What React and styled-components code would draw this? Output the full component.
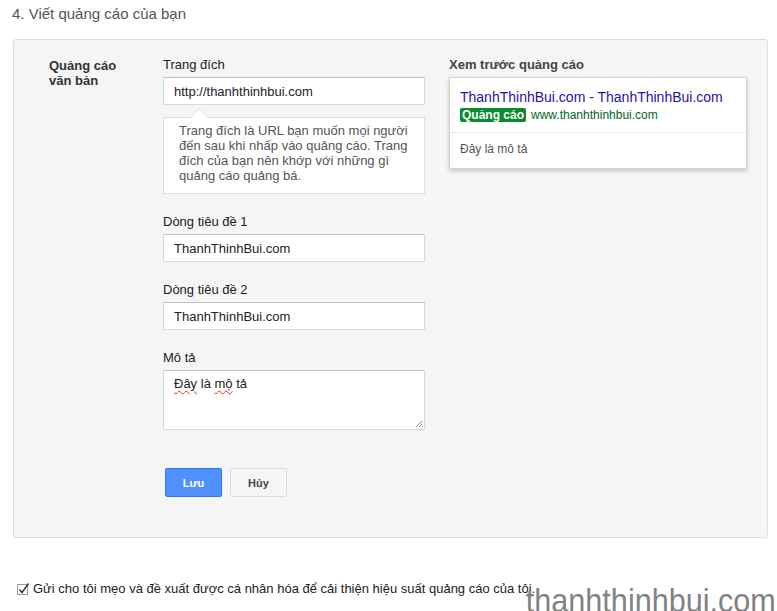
import React from 'react'
import styled, { createGlobalStyle } from 'styled-components'

const GlobalStyle = createGlobalStyle`
  body {
    margin: 0;
    background: #fff;
    font-family: 'Liberation Sans', Arial, sans-serif;
    color: #333;
  }
`

const Page = styled.div`
  position: relative;
  width: 777px;
  height: 611px;
  overflow: hidden;
`

const Heading = styled.h2`
  margin: 0;
  padding: 5px 0 0 12px;
  font-size: 15px;
  line-height: 18px;
  font-weight: 400;
  color: #555;
`

const Panel = styled.div`
  box-sizing: border-box;
  margin: 16px 0 0 13px;
  width: 755px;
  height: 499px;
  padding: 17px 0 0 35px;
  background: #f5f5f5;
  border: 1px solid #dcdcdc;
  border-radius: 3px;
  display: grid;
  grid-template-columns: 90px 262px 298px;
  column-gap: 24px;
  align-items: start;
`

const SideLabel = styled.div`
  font-size: 13px;
  line-height: 15px;
  font-weight: 700;
  color: #333;
  max-width: 70px;
  padding-top: 1px;
`

const FormCol = styled.div`
  display: flex;
  flex-direction: column;
`

const Field = styled.div`
  display: flex;
  flex-direction: column;
  gap: 4px;
  margin-top: ${p => p.$mt ?? 0}px;
`

const Label = styled.label`
  font-size: 13px;
  line-height: 16px;
  color: #222;
`

const Input = styled.input`
  box-sizing: border-box;
  width: 262px;
  height: 28px;
  padding: 0 10px;
  border: 1px solid #d9d9d9;
  border-top-color: #c0c0c0;
  background: #fff;
  font-family: 'Liberation Sans', Arial, sans-serif;
  font-size: 13px;
  color: #222;
  outline: none;
`

const Squiggle = styled.span`
  text-decoration: underline wavy #e03030;
  text-decoration-thickness: 1px;
  text-underline-offset: 2px;
`

const FakeArea = styled.div`
  position: relative;
  box-sizing: border-box;
  width: 262px;
  height: 60px;
  padding: 4px 10px;
  border: 1px solid #d9d9d9;
  border-top-color: #c0c0c0;
  background: #fff;
  font-size: 13px;
  line-height: 18px;
  color: #222;
`

const Grip = styled.svg`
  position: absolute;
  right: 1px;
  bottom: 1px;
`

const Tip = styled.div`
  position: relative;
  margin-top: 12px;
  box-sizing: border-box;
  width: 262px;
  padding: 5px 12px 10px 15px;
  background: #fff;
  border: 1px solid #ddd;
  font-size: 13px;
  line-height: 15px;
  color: #555;

  &::before, &::after {
    content: '';
    position: absolute;
    left: 26px;
    width: 0;
    height: 0;
    border: 9px solid transparent;
    border-top: 0;
  }
  &::before {
    top: -10px;
    border-bottom: 10px solid #ddd;
  }
  &::after {
    top: -9px;
    border-bottom: 10px solid #fff;
  }
`

const Buttons = styled.div`
  display: flex;
  gap: 8px;
  margin: 38px 0 0 2px;
`

const Button = styled.button`
  box-sizing: border-box;
  width: 57px;
  height: 29px;
  border-radius: 2px;
  font-family: 'Liberation Sans', Arial, sans-serif;
  font-size: 11px;
  font-weight: 700;
  border: 1px solid ${p => (p.$primary ? '#3079ed' : '#dcdcdc')};
  background: ${p => (p.$primary ? '#4d90fe' : '#f5f5f5')};
  color: ${p => (p.$primary ? '#fff' : '#444')};
`

const PreviewCol = styled.div`
  display: flex;
  flex-direction: column;
  gap: 4px;
`

const PreviewTitle = styled.div`
  font-size: 13px;
  line-height: 16px;
  font-weight: 700;
  color: #444;
`

const Card = styled.div`
  background: #fff;
  border: 1px solid #d4d4d4;
  box-shadow: 0 2px 4px rgba(0, 0, 0, 0.2);
`

const CardHead = styled.div`
  padding: 10px 10px 9px;
  border-bottom: 1px solid #ebebeb;
`

const AdTitle = styled.div`
  font-size: 14px;
  line-height: 19px;
  color: #2a0fae;
`

const AdUrl = styled.div`
  display: flex;
  align-items: center;
  gap: 5px;
  font-size: 12px;
  line-height: 16px;
  color: #006621;
`

const Badge = styled.span`
  background: #0a8a2e;
  color: #fff;
  font-weight: 700;
  font-size: 12px;
  line-height: 14px;
  padding: 0 2px;
  border-radius: 2px;
`

const CardBody = styled.div`
  padding: 8px 10px 11px;
  font-size: 12px;
  line-height: 16px;
  color: #545454;
`

const Consent = styled.div`
  display: flex;
  align-items: center;
  gap: 3px;
  margin: 43px 0 0 17px;
  font-size: 13px;
  color: #222;
`

const Watermark = styled.div`
  position: absolute;
  right: 1px;
  bottom: -6px;
  font-size: 34px;
  line-height: 34px;
  color: #828282;
  transform: scaleX(0.9);
  transform-origin: right bottom;
`

const CheckIcon = () => (
  <svg width="13" height="13" viewBox="0 0 13 13">
    <rect x="0.5" y="2.5" width="10" height="10" fill="#fff" stroke="#9a9a9a" />
    <path d="M2.5 7.5 L5 10.5 L11.5 1.5" fill="none" stroke="#333" strokeWidth="1.4" />
  </svg>
)

export default function App() {
  return (
    <Page>
      <GlobalStyle />
      <Heading>4. Viết quảng cáo của bạn</Heading>
      <Panel>
        <SideLabel>Quảng cáo văn bản</SideLabel>
        <FormCol>
          <Field>
            <Label>Trang đích</Label>
            <Input defaultValue="http://thanhthinhbui.com" />
          </Field>
          <Tip>
            Trang đích là URL bạn muốn mọi người đến sau khi nhấp vào quảng cáo. Trang đích của bạn nên khớp với những gì quảng cáo quảng bá.
          </Tip>
          <Field $mt={20}>
            <Label>Dòng tiêu đề 1</Label>
            <Input defaultValue="ThanhThinhBui.com" />
          </Field>
          <Field $mt={20}>
            <Label>Dòng tiêu đề 2</Label>
            <Input defaultValue="ThanhThinhBui.com" />
          </Field>
          <Field $mt={20}>
            <Label>Mô tả</Label>
            <FakeArea>
              <Squiggle>Đây</Squiggle>{' là '}<Squiggle>mộ</Squiggle>{' tả'}
              <Grip width="8" height="8" viewBox="0 0 8 8">
                <path d="M7 1 L1 7 M7 4 L4 7" stroke="#888" strokeWidth="1" />
              </Grip>
            </FakeArea>
          </Field>
          <Buttons>
            <Button $primary>Lưu</Button>
            <Button>Hủy</Button>
          </Buttons>
        </FormCol>
        <PreviewCol>
          <PreviewTitle>Xem trước quảng cáo</PreviewTitle>
          <Card>
            <CardHead>
              <AdTitle>ThanhThinhBui.com - ThanhThinhBui.com</AdTitle>
              <AdUrl>
                <Badge>Quảng cáo</Badge>
                www.thanhthinhbui.com
              </AdUrl>
            </CardHead>
            <CardBody>Đây là mô tả</CardBody>
          </Card>
        </PreviewCol>
      </Panel>
      <Consent>
        <CheckIcon />
        Gửi cho tôi mẹo và đề xuất được cá nhân hóa để cải thiện hiệu suất quảng cáo của tôi.
      </Consent>
      <Watermark>thanhthinhbui.com</Watermark>
    </Page>
  )
}
